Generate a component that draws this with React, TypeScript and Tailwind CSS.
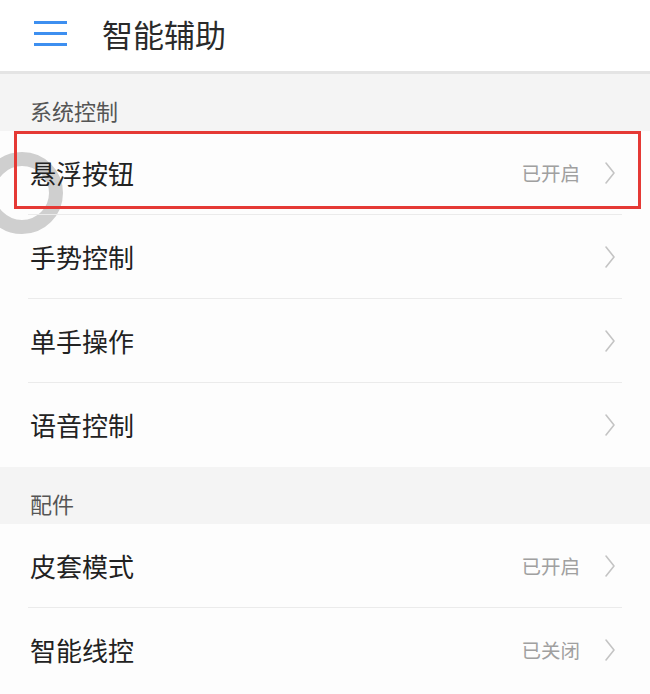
const font = { fontFamily: '"Noto Sans CJK SC", "Noto Sans", sans-serif' };

type Item = { label: string; value?: string };

function Chevron() {
  return (
    <svg width="12" height="24" viewBox="0 0 12 24" fill="none" className="text-[#c4c4c4]">
      <path d="M2 2 L10 12 L2 22" stroke="currentColor" strokeWidth="1.6" strokeLinecap="round" strokeLinejoin="round" />
    </svg>
  );
}

function Section({ title }: { title: string }) {
  return (
    <div className="h-[57px] bg-[#f4f4f4] flex items-end pb-[10px] pl-[30px]">
      <span className="text-[22px] text-[#555] leading-none">{title}</span>
    </div>
  );
}

function Row({ item, last }: { item: Item; last?: boolean }) {
  return (
    <div className="h-[84px] mx-[28px] flex items-center justify-between relative">
      <span className="text-[26px] text-[#222] leading-none pl-[2px]">{item.label}</span>
      <div className="flex items-center gap-[24px] text-[#a0a0a0] pr-[6px]">
        {item.value && <span className="text-[19.5px] leading-none">{item.value}</span>}
        <Chevron />
      </div>
      {!last && <div className="absolute left-0 right-0 bottom-0 h-px bg-[#ebebeb]" />}
    </div>
  );
}

export default function App() {
  const system: Item[] = [
    { label: "悬浮按钮", value: "已开启" },
    { label: "手势控制" },
    { label: "单手操作" },
    { label: "语音控制" },
  ];
  const parts: Item[] = [
    { label: "皮套模式", value: "已开启" },
    { label: "智能线控", value: "已关闭" },
  ];

  return (
    <div className="w-[650px] h-[694px] bg-[#fdfdfd] relative overflow-hidden" style={font}>
      {/* floating button ring, sits under the list text */}
      <div className="absolute left-[-19px] top-[152px] w-[82px] h-[82px] rounded-full border-[14px] border-[#cfcfcf] pointer-events-none" />

      <div className="relative">
        <div className="h-[71px] flex items-center pl-[34px] gap-[35px] pb-[5px] bg-white">
          <div className="flex flex-col gap-[8px] w-[33px]">
            <div className="h-[3px] bg-[#3d8ff0]" />
            <div className="h-[3px] bg-[#3d8ff0]" />
            <div className="h-[3px] bg-[#3d8ff0]" />
          </div>
          <span className="text-[31px] text-[#2a2a2a] leading-none">智能辅助</span>
        </div>
        <div className="h-[3px] bg-[#e4e4e4]" />

        <Section title="系统控制" />
        {system.map((it, i) => (
          <Row key={it.label} item={it} last={i === system.length - 1} />
        ))}

        <Section title="配件" />
        {parts.map((it, i) => (
          <Row key={it.label} item={it} last={i === parts.length - 1} />
        ))}
      </div>

      {/* highlight box */}
      <div className="absolute left-[14px] top-[131px] w-[627px] h-[78px] border-[3px] border-[#e53935] pointer-events-none" />
    </div>
  );
}
